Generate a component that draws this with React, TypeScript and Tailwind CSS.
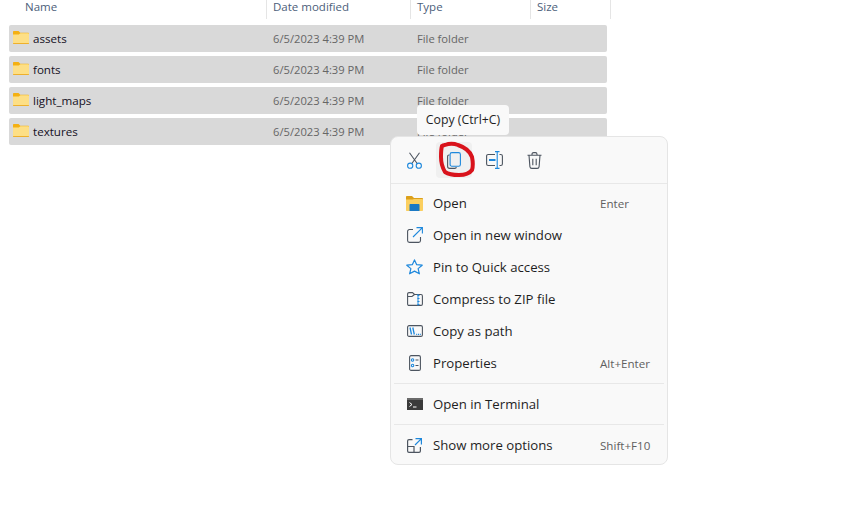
import type { ReactNode } from "react";

const font = "font-['Open_Sans','Noto_Sans',sans-serif]";

const folders = ["assets", "fonts", "light_maps", "textures"];

function FolderIcon() {
  return (
    <svg width="16" height="13" viewBox="0 0 16 13" className="shrink-0">
      <path d="M0 1C0 .4.400 0 1 0h4.500l1.800 1.700H15c.6 0 1 .4 1 1V5H0z" fill="#f4b012" />
      <path d="M0 3.400h5.800l1.600-1.200H15c.6 0 1 .4 1 1V12c0 .6-.4 1-1 1H1c-.6 0-1-.4-1-1z" fill="#fddf86" />
      <rect x="0" y="12" width="16" height="1" rx=".5" fill="#eeb02c" />
    </svg>
  );
}

function OpenIcon() {
  return (
    <svg width="17" height="15" viewBox="0 0 17 15">
      <path d="M0 1c0-.6.400-1 1-1h5l2 2h8c.6 0 1 .4 1 1v3H0z" fill="#dca01a" />
      <path d="M0 3.500h6.500L8 3h8c.6 0 1 .4 1 1v10c0 .6-.4 1-1 1H1c-.6 0-1-.4-1-1z" fill="#fbcf5f" />
      <path d="M3.500 9c0-.6.400-1 1-1h8c.6 0 1 .4 1 1v6h-10z" fill="#1b79c4" />
    </svg>
  );
}

const stroke = "#4d5560";
const blue = "#1e88dc";

function Cut() {
  return (
    <svg width="15" height="17" viewBox="0 0 15 17" fill="none" strokeWidth="1.1">
      <path d="M2.500.8 10.500 12M12.500.8 4.500 12" stroke={stroke} />
      <circle cx="3.200" cy="13.700" r="2.600" stroke={blue} />
      <circle cx="11.800" cy="13.700" r="2.600" stroke={blue} />
    </svg>
  );
}

function Copy() {
  return (
    <svg width="14" height="17" viewBox="0 0 14 17" fill="none" strokeWidth="1.1">
      <path d="M2.500 3H2C1.200 3 .6 3.700.6 4.500v9.800c0 1.200.9 2.100 2.100 2.100h5.100c.8 0 1.500-.6 1.600-1.300" stroke={stroke} />
      <rect x="3.100" y=".6" width="10.300" height="13.600" rx="1.800" stroke={blue} />
    </svg>
  );
}

function Rename() {
  return (
    <svg width="17" height="18" viewBox="0 0 17 18" fill="none" strokeWidth="1.1">
      <path d="M9 3.500H2.200C1.200 3.500.6 4.200.6 5v8c0 .9.600 1.500 1.600 1.500H9M13.500 3.500h1.200c1 0 1.700.7 1.700 1.500v8c0 .9-.7 1.500-1.700 1.500h-1.200" stroke={stroke} />
      <path d="M9 .6h4.500M9 17.400h4.500M11.200.6v16.800" stroke={blue} />
      <rect x="3" y="8" width="6.500" height="2" fill={blue} />
    </svg>
  );
}

function Trash() {
  return (
    <svg width="15" height="17" viewBox="0 0 15 17" fill="none" stroke={stroke} strokeWidth="1.1">
      <path d="M.5 3.300h14M5 3.300V2.200C5 1.200 5.800.6 6.600.6h1.800c.9 0 1.600.6 1.600 1.600v1.100M2 3.300l.9 11.300c.1 1 .9 1.800 1.900 1.800h5.400c1 0 1.800-.8 1.900-1.800L13 3.300M5.800 6.800v6.400M9.200 6.800v6.400" />
    </svg>
  );
}

function NewWindow() {
  return (
    <svg width="16" height="16" viewBox="0 0 16 16" fill="none" strokeWidth="1.1">
      <path d="M6 2.500H2.400C1.400 2.500.6 3.300.6 4.300v9.300c0 1 .8 1.800 1.800 1.800h9.300c1 0 1.800-.8 1.800-1.800V10" stroke={stroke} />
      <path d="M9.500.6h5.900v5.900M15.200.8 6 10" stroke={blue} />
    </svg>
  );
}

function Star() {
  return (
    <svg width="17" height="16" viewBox="0 0 17 16" fill="none" stroke={blue} strokeWidth="1.2" strokeLinejoin="round">
      <path d="M8.500.9 10.700 5.700l5.500.5-4.100 3.400 1.300 5.200-4.900-2.700-4.900 2.700 1.300-5.200L.8 6.200l5.500-.5z" />
    </svg>
  );
}

function Zip() {
  return (
    <svg width="16" height="14" viewBox="0 0 16 14" fill="none" strokeWidth="1.1">
      <path d="M.6 12V2C.6 1.200 1.200.6 2 .6h3.500l2 1.900H14c.8 0 1.400.6 1.400 1.400V12c0 .8-.6 1.400-1.400 1.400H2c-.8 0-1.400-.6-1.400-1.400ZM.6 4.500H5L7.500 2.500" stroke={stroke} />
      <path d="M11 2v11.500" stroke={blue} strokeWidth="1" />
      <path d="M10.500 3.500h2M10.500 6.500h2M10.500 9.500h2M10.500 12.500h2" stroke={blue} strokeWidth="1.200" />
    </svg>
  );
}

function PathIcon() {
  return (
    <svg width="16" height="12" viewBox="0 0 16 12" fill="none" strokeWidth="1.1">
      <rect x=".6" y=".6" width="14.800" height="10.800" rx="1.500" stroke={stroke} />
      <path d="M3 2.500 4.500 9.500M5.800 2.500l1.500 7" stroke={blue} strokeWidth="1.300" />
      <path d="M9.200 9.300h1M11 9.300h1M12.800 9.300h1" stroke={blue} strokeWidth="1.200" />
    </svg>
  );
}

function Props() {
  return (
    <svg width="12" height="16" viewBox="0 0 12 16" fill="none" strokeWidth="1.1">
      <rect x=".6" y=".6" width="10.800" height="14.800" rx="1.500" stroke={stroke} />
      <circle cx="3.600" cy="5" r="1.200" stroke={blue} />
      <circle cx="3.600" cy="10.500" r="1.200" stroke={blue} />
      <path d="M6.500 5h3M6.500 10.500h3" stroke={stroke} />
    </svg>
  );
}

function TerminalIcon() {
  return (
    <svg width="16" height="12" viewBox="0 0 16 12">
      <rect width="16" height="12" fill="#3a3a3a" />
      <rect width="16" height="2" fill="#6b6b6b" />
      <path d="m2.500 4.500 2.500 2-2.500 2" fill="none" stroke="#fff" strokeWidth="1" />
      <path d="M6 9h3.500" stroke="#fff" strokeWidth="1" />
    </svg>
  );
}

function MoreIcon() {
  return (
    <svg width="15" height="15" viewBox="0 0 15 15" fill="none" strokeWidth="1.2">
      <path d="M5.500 1.600H2C1.200 1.600.6 2.200.6 3v10c0 .8.600 1.400 1.400 1.400h10c.8 0 1.400-.6 1.400-1.400V9M.6 8.500h6.400v5.900" stroke={stroke} />
      <path d="M8.500.6h5.900v5.900M14.200.8 8 7" stroke={blue} />
    </svg>
  );
}

function MenuRow({ icon, label, hint }: { icon: ReactNode; label: string; hint?: string }) {
  return (
    <div className="flex h-8 items-center pl-3">
      <div className="flex w-[17px] justify-center">{icon}</div>
      <span className="ml-[10px] mt-px flex-1 text-[13.2px] text-[#1f1f1f]">{label}</span>
      {hint && <span className="mt-px w-[64px] pr-3 text-[11.6px] text-[#5f5f5f]">{hint}</span>}
    </div>
  );
}

export default function App() {
  return (
    <div className={`relative h-[507px] w-[866px] overflow-hidden bg-white ${font}`}>
      {/* Column headers */}
      <div className="flex h-[19px] text-[11.5px] leading-[13px] text-[#4c607a]">
        <div className="w-[267px] border-r border-[#e5e5e5] pl-[25px]">Name</div>
        <div className="w-[144px] border-r border-[#e5e5e5] pl-[6px]">Date modified</div>
        <div className="w-[120px] border-r border-[#e5e5e5] pl-[6px]">Type</div>
        <div className="w-[80px] border-r border-[#e5e5e5] pl-[6px]">Size</div>
      </div>

      {/* Rows */}
      <div className="ml-[9px] mt-[6px] flex w-[598px] flex-col gap-1">
        {folders.map((name) => (
          <div key={name} className="flex h-[27px] items-center rounded-[2px] bg-[#d9d9d9] pt-px text-[11.2px]">
            <div className="flex w-[264px] items-center pl-1">
              <div className="-mt-[3px]">
                <FolderIcon />
              </div>
              <span className="ml-1 text-[11.6px] text-[#14101e]">{name}</span>
            </div>
            <span className="w-[144px] text-[#666666]">6/5/2023 4:39 PM</span>
            <span className="text-[#666666]">File folder</span>
          </div>
        ))}
      </div>

      {/* Context menu */}
      <div className="absolute left-[390px] top-[136px] w-[278px] rounded-lg border border-[#e5e5e5] bg-[#f9f9f9]">
        <div className="flex h-[47px] items-center border-b border-[#e8e8e8] pl-[15px]">
          <div className="flex w-[17px] justify-center"><Cut /></div>
          <div className="ml-[13px] flex h-9 w-9 items-center justify-center rounded bg-[#f0f0f0]"><Copy /></div>
          <div className="ml-[14px] flex w-[17px] justify-center"><Rename /></div>
          <div className="ml-[24px] flex w-[15px] justify-center"><Trash /></div>
        </div>
        <div className="mx-[3px] border-b border-[#e8e8e8] pb-1 pt-[3px]">
          <MenuRow icon={<OpenIcon />} label="Open" hint="Enter" />
          <MenuRow icon={<NewWindow />} label="Open in new window" />
          <MenuRow icon={<Star />} label="Pin to Quick access" />
          <MenuRow icon={<Zip />} label="Compress to ZIP file" />
          <MenuRow icon={<PathIcon />} label="Copy as path" />
          <MenuRow icon={<Props />} label="Properties" hint="Alt+Enter" />
        </div>
        <div className="mx-[3px] border-b border-[#e8e8e8] py-1">
          <MenuRow icon={<TerminalIcon />} label="Open in Terminal" />
        </div>
        <div className="mx-[3px] pb-[3px] pt-1">
          <MenuRow icon={<MoreIcon />} label="Show more options" hint="Shift+F10" />
        </div>
      </div>

      {/* Tooltip */}
      <div className="absolute left-[417px] top-[105px] flex h-[30px] w-[92px] items-center justify-center rounded bg-[#f9f9f9] pt-px text-[12.3px] text-[#1f1f1f]">
        Copy (Ctrl+C)
      </div>

      {/* Red marker circle */}
      <svg className="absolute left-[436px] top-[138px]" width="40" height="44" viewBox="0 0 40 44" fill="none">
        <path
          d="M9 7c4-1.500 9-1.500 13 0 6 2 12 6 14 12 1 5 1 10 0 13-3 4-8 5-13 5-5 0-11-1-14-3-3-5-4-10-4-15 0-4 0-8 1-11 1-1 2-1 3-1"
          stroke="#d9131c"
          strokeWidth="4"
          strokeLinecap="round"
          strokeLinejoin="round"
        />
      </svg>
    </div>
  );
}
